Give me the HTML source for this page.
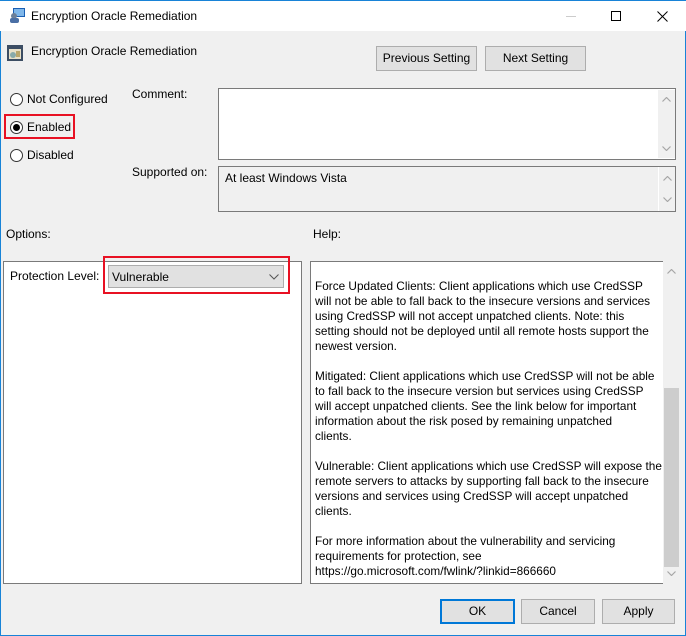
<!DOCTYPE html>
<html><head><meta charset="utf-8"><style>
*{box-sizing:border-box;margin:0;padding:0}
body{width:686px;height:636px;overflow:hidden;font:12px "Liberation Sans",sans-serif;color:#000;background:#f0f0f0;position:relative}
.a{position:absolute}
.win{left:0;top:0;width:686px;height:636px;border:1px solid #1883d7;border-top:none;background:#f0f0f0}
.title{left:0;top:0;width:686px;height:31px;background:#fff;border-top:1px solid #1883d7}
.btn{position:absolute;background:#e1e1e1;border:1px solid #adadad;text-align:center;font-size:12px;line-height:22px}
.box{position:absolute;border:1px solid #7a7a7a;background:#fff}
.sb{position:absolute;right:0;top:0;bottom:0;width:17px;background:#f0f0f0}
.radio{position:absolute;width:13px;height:13px;border:1px solid #333;border-radius:50%;background:#fff}
.help{left:310px;top:261px;width:370px;height:323px}
.help p{margin:0 0 15px 0;line-height:15px;white-space:nowrap}
</style></head><body>
<svg width="0" height="0" style="position:absolute"><defs>
<symbol id="up" viewBox="0 0 9 5"><path d="M0.5 4.5L4.5 0.5L8.5 4.5" fill="none" stroke="#a6a6a6" stroke-width="1.2"/></symbol>
<symbol id="dn" viewBox="0 0 9 5"><path d="M0.5 0.5L4.5 4.5L8.5 0.5" fill="none" stroke="#a6a6a6" stroke-width="1.2"/></symbol>
</defs></svg>
<div class="a win"></div>
<div class="a title">
 <svg class="a" style="left:9px;top:6px" width="17" height="17"><rect x="4" y="1" width="12" height="9" fill="#1a5fb4"/><rect x="5" y="2" width="10" height="7" fill="#7fb7ea"/><circle cx="5" cy="9" r="3" fill="#6b7f99"/><rect x="1" y="11" width="9" height="5" rx="2" fill="#4a6fa5"/></svg>
 <div class="a" style="left:31px;top:8px">Encryption Oracle Remediation</div>
 <div class="a" style="left:566px;top:15px;width:10px;height:1px;background:#ccc"></div>
 <div class="a" style="left:611px;top:10px;width:10px;height:10px;border:1px solid #000"></div>
 <svg class="a" style="left:657px;top:10px" width="11" height="11"><path d="M0.5 0.5L10.5 10.5M10.5 0.5L0.5 10.5" stroke="#000" stroke-width="1"/></svg>
</div>
<svg class="a" style="left:7px;top:45px" width="16" height="16"><rect x="0" y="0" width="16" height="16" fill="#3c4d63"/><rect x="2" y="4" width="12" height="10" fill="#e8e0c8"/><circle cx="6" cy="10" r="3" fill="#8aa"/><rect x="9" y="6" width="4" height="6" fill="#b9a66b"/></svg>
<div class="a" style="left:31px;top:44px">Encryption Oracle Remediation</div>
<div class="btn" style="left:376px;top:46px;width:101px;height:25px">Previous Setting</div>
<div class="btn" style="left:485px;top:46px;width:101px;height:25px">Next Setting</div>

<div class="radio" style="left:10px;top:93px"></div><div class="a" style="left:27px;top:92px">Not Configured</div>
<div class="radio" style="left:10px;top:121px"></div><div class="a" style="left:13px;top:124px;width:7px;height:7px;border-radius:50%;background:#000"></div><div class="a" style="left:27px;top:120px">Enabled</div>
<div class="a" style="left:4px;top:114px;width:71px;height:25px;border:2px solid #e81123"></div>
<div class="radio" style="left:10px;top:149px"></div><div class="a" style="left:27px;top:148px">Disabled</div>

<div class="a" style="left:132px;top:87px">Comment:</div>
<div class="box" style="left:218px;top:88px;width:458px;height:72px;"><div class="sb" style="top:1px;bottom:1px"><svg class="a" style="left:4px;top:7px" width="9" height="5"><use href="#up"/></svg><svg class="a" style="left:4px;bottom:7px" width="9" height="5"><use href="#dn"/></svg></div></div>
<div class="a" style="left:132px;top:165px">Supported on:</div>
<div class="box" style="left:218px;top:166px;width:458px;height:46px;background:#f0f0f0"><div class="a" style="left:6px;top:4px">At least Windows Vista</div><div class="sb" style="border-left:1px solid #fff"><svg class="a" style="left:4px;top:9px" width="9" height="5"><use href="#up"/></svg><svg class="a" style="left:4px;bottom:9px" width="9" height="5"><use href="#dn"/></svg></div></div>

<div class="a" style="left:6px;top:227px">Options:</div>
<div class="a" style="left:313px;top:227px">Help:</div>

<div class="box" style="left:3px;top:261px;width:299px;height:323px"></div>
<div class="a" style="left:10px;top:269px">Protection Level:</div>
<div class="a" style="left:103px;top:256px;width:187px;height:38px;border:2px solid #e81123"></div>
<div class="a" style="left:108px;top:265px;width:176px;height:23px;background:#e1e1e1;border:1px solid #adadad"><div class="a" style="left:3px;top:4px">Vulnerable</div><svg class="a" style="left:160px;top:8px" width="10" height="6"><path d="M0.5 0.5L5 5L9.5 0.5" fill="none" stroke="#555"/></svg></div>

<div class="box help">
 <div class="a" style="left:4px;top:17px;width:345px;font-size:11.8px">
  <p>Force Updated Clients: Client applications which use CredSSP<br>will not be able to fall back to the insecure versions and services<br>using CredSSP will not accept unpatched clients. Note: this<br>setting should not be deployed until all remote hosts support the<br>newest version.</p>
  <p>Mitigated: Client applications which use CredSSP will not be able<br>to fall back to the insecure version but services using CredSSP<br>will accept unpatched clients. See the link below for important<br>information about the risk posed by remaining unpatched<br>clients.</p>
  <p>Vulnerable: Client applications which use CredSSP will expose the<br>remote servers to attacks by supporting fall back to the insecure<br>versions and services using CredSSP will accept unpatched<br>clients.</p>
  <p>For more information about the vulnerability and servicing<br>requirements for protection, see<br>https://go.microsoft.com/fwlink/?linkid=866660</p>
 </div>
</div>
<div class="a" style="left:663px;top:261px;width:17px;height:323px;background:#f0f0f0"><svg class="a" style="left:4px;top:8px" width="9" height="5"><use href="#up"/></svg><div class="a" style="left:1px;top:127px;width:15px;height:179px;background:#cdcdcd"></div><svg class="a" style="left:4px;bottom:8px" width="9" height="5"><use href="#dn"/></svg></div>

<div class="btn" style="left:440px;top:599px;width:75px;height:25px;border:2px solid #0078d7;line-height:21px">OK</div>
<div class="btn" style="left:521px;top:599px;width:74px;height:25px">Cancel</div>
<div class="btn" style="left:602px;top:599px;width:73px;height:25px">Apply</div>
</body></html>
